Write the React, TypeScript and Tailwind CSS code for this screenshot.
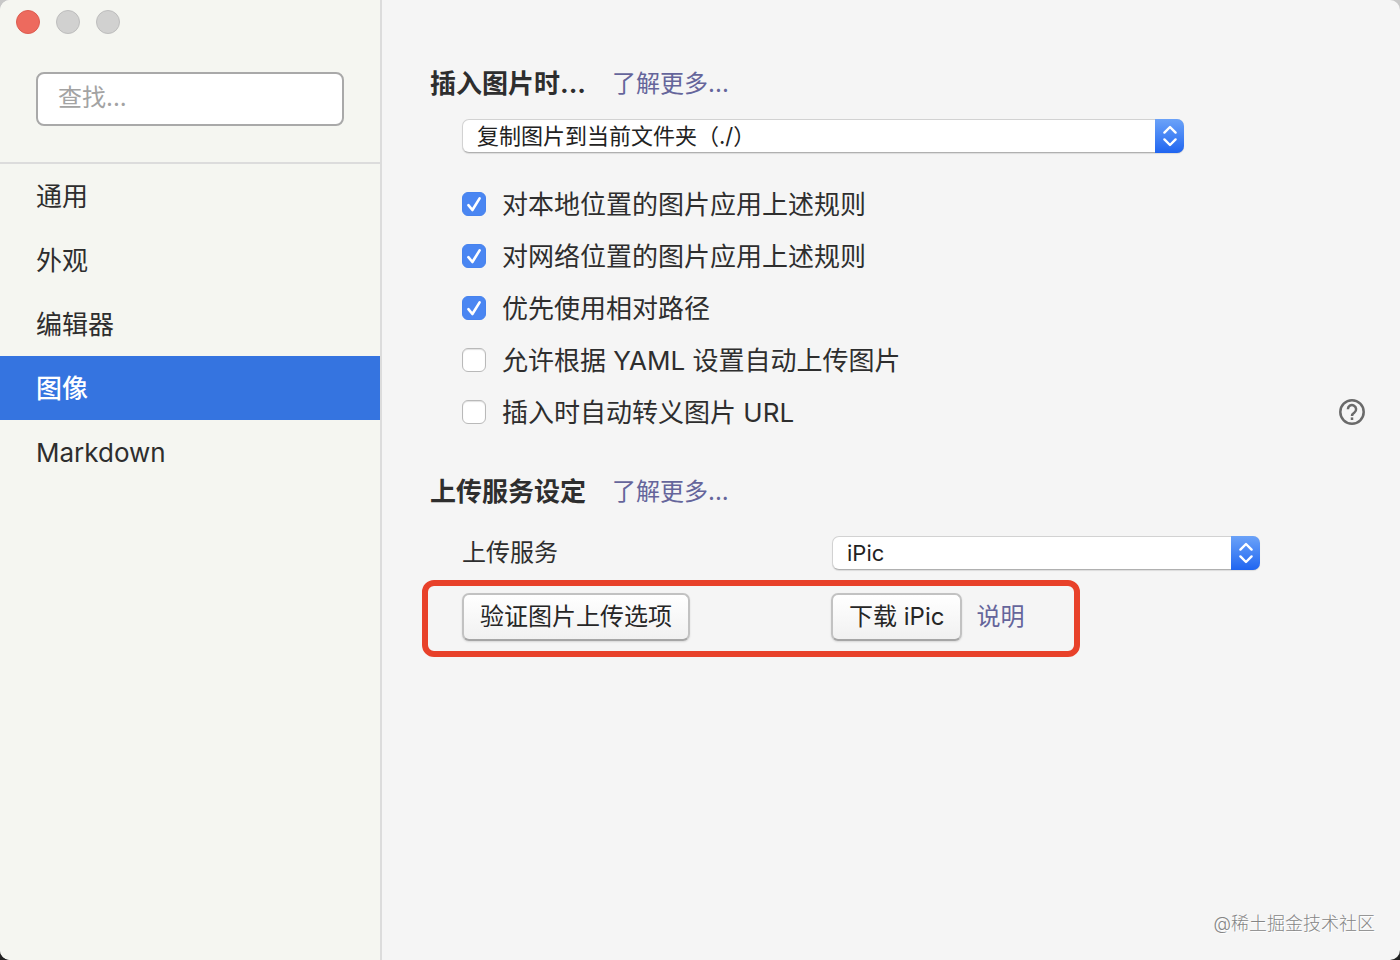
import { useState } from 'react'

interface Rule {
  id: string
  label: string
  checked: boolean
}

interface PopupSelectProps {
  id: string
  label?: string
  options: string[]
  className: string
}

const sections = ['通用', '外观', '编辑器', '图像', 'Markdown']

const initialRules: Rule[] = [
  { id: 'local', label: '对本地位置的图片应用上述规则', checked: true },
  { id: 'remote', label: '对网络位置的图片应用上述规则', checked: true },
  { id: 'relative', label: '优先使用相对路径', checked: true },
  { id: 'yaml', label: '允许根据 YAML 设置自动上传图片', checked: false },
  { id: 'escape', label: '插入时自动转义图片 URL', checked: false }
]

const buttonClass =
  'h-12 rounded-[7px] border-2 border-[#c2c2c2] border-b-[#a6a6a6] bg-linear-to-b from-white to-[#f1f1f1] px-4 text-2xl leading-8 whitespace-nowrap text-[#262626] shadow-[0_1px_2px_rgba(0,0,0,0.12)]'

const PopupSelect = ({ id, label, options, className }: PopupSelectProps) => (
  <div className={`relative max-w-full ${className}`}>
    <select
      id={id}
      aria-label={label}
      className="h-[34px] w-full appearance-none rounded-[7px] border border-[#d2d2d2] border-b-[#b0b0b0] bg-white pr-9 pl-[14px] text-[22px] leading-8 text-[#222] shadow-[0_1px_1px_rgba(0,0,0,0.1)]"
    >
      {options.map(option => (
        <option key={option}>{option}</option>
      ))}
    </select>
    {/* Blue stepper cap */}
    <span className="pointer-events-none absolute top-0 right-0 flex h-[34px] w-[29px] items-center justify-center rounded-r-[7px] bg-linear-to-b from-[#6ba2f8] to-[#1f64f0]">
      <svg width="16" height="22" viewBox="0 0 16 22" fill="none" stroke="white" strokeWidth="2.4" strokeLinecap="round" strokeLinejoin="round">
        <path d="M2.4 7.6 8 2 13.6 7.6" />
        <path d="M2.4 14.4 8 20 13.6 14.4" />
      </svg>
    </span>
  </div>
)

const Sidebar = () => {
  const [active, setActive] = useState('图像')

  return (
    <aside className="w-[382px] shrink-0 border-r-2 border-[#dcdcdc] bg-[#f5f6f1]">
      <div className="border-b-2 border-[#dcdcdc] pb-9">
        <div className="flex gap-4 px-4 pt-[10px]">
          <button aria-label="关闭" className="size-6 rounded-full border border-[#dc5c50] bg-[#ed6a5e]" />
          <button aria-label="最小化" className="size-6 rounded-full border border-[#bdbdbd] bg-[#d1d1d0]" />
          <button aria-label="缩放" className="size-6 rounded-full border border-[#bdbdbd] bg-[#d1d1d0]" />
        </div>
        <div className="px-9 pt-[38px]">
          <input
            type="search"
            aria-label="查找"
            placeholder="查找..."
            className="h-[54px] w-full rounded-lg border-2 border-[#a9a9a9] bg-white px-5 pb-1 text-2xl text-[#2b2b2b] placeholder:text-[#a3a3a3]"
          />
        </div>
      </div>
      <nav>
        {sections.map(section => (
          <button
            key={section}
            onClick={() => setActive(section)}
            className={`block h-16 w-full px-9 pt-[2px] text-left text-[26px] leading-8 ${
              active === section ? 'bg-[#3574e0] font-medium text-white' : 'text-[#2e2e2e]'
            }`}
          >
            {section}
          </button>
        ))}
      </nav>
    </aside>
  )
}

const HelpIcon = () => (
  <svg width="26" height="26" viewBox="0 0 26 26" fill="none" stroke="#6a6a6a" strokeWidth="2.5">
    <circle cx="13" cy="13" r="11.7" />
    <path d="M8.9 10.2a4.1 4.1 0 1 1 6.5 3.3c-1.5 1-2.4 1.7-2.4 3.4" />
    <path d="M13 18.4V21" />
  </svg>
)

export default function App() {
  const [rules, setRules] = useState(initialRules)

  const toggleRule = (id: string) => {
    setRules(prev => prev.map(rule => (rule.id === id ? { ...rule, checked: !rule.checked } : rule)))
  }

  return (
    <div className="flex min-h-screen bg-linear-to-b from-[#c8c8c8] to-[#222] font-[Inter,'Noto_Sans_CJK_SC',sans-serif] text-[#2e2e2e]">
      <div className="relative flex flex-1 overflow-hidden rounded-[10px] bg-[#f5f5f5]">
        <Sidebar />
        <main className="min-w-0 flex-1 pt-[66px] pr-[35px] pl-12">
          <section>
            <div className="flex items-center gap-[26px] leading-9">
              <h2 className="text-[26px] font-bold">插入图片时...</h2>
              <a href="#insert" className="text-2xl leading-9 text-[#65659b]">了解更多...</a>
            </div>
            <div className="pt-[17px] pl-8">
              <PopupSelect
                id="insert-action"
                label="插入图片时"
                options={['复制图片到当前文件夹（./）', '无特殊操作', '上传图片']}
                className="w-[722px]"
              />
              <ul className="pt-[25px]">
                {rules.map(rule => (
                  <li key={rule.id} className="flex h-[52px] items-center">
                    <span className="grid size-6 shrink-0 place-items-center">
                      <input
                        id={rule.id}
                        type="checkbox"
                        checked={rule.checked}
                        onChange={() => toggleRule(rule.id)}
                        className="col-start-1 row-start-1 size-6 appearance-none rounded-[6px] border border-[#b9b9b9] bg-white shadow-[inset_0_1px_1px_rgba(0,0,0,0.12)] checked:border-[#4783ee] checked:bg-[#4a86f2] checked:shadow-none"
                      />
                      {rule.checked && (
                        <svg className="pointer-events-none col-start-1 row-start-1" width="24" height="24" viewBox="0 0 24 24" fill="none" stroke="white" strokeWidth="2.6" strokeLinecap="round" strokeLinejoin="round">
                          <path d="m6.4 13.2 4 4.8L17.6 6.4" />
                        </svg>
                      )}
                    </span>
                    <label htmlFor={rule.id} className="pt-[2px] pl-4 text-[26px] leading-9">{rule.label}</label>
                    {rule.id === 'escape' && (
                      <button aria-label="帮助" className="ml-auto">
                        <HelpIcon />
                      </button>
                    )}
                  </li>
                ))}
              </ul>
            </div>
          </section>

          <section className="pt-9">
            <div className="flex items-center gap-[26px] leading-9">
              <h2 className="text-[26px] font-bold">上传服务设定</h2>
              <a href="#upload" className="text-2xl leading-9 text-[#65659b]">了解更多...</a>
            </div>
            <div className="flex items-center pt-[26px] pl-8">
              <label htmlFor="uploader" className="w-[370px] shrink-0 text-2xl leading-8">上传服务</label>
              <PopupSelect id="uploader" options={['iPic', 'uPic', 'PicGo']} className="w-[428px]" />
            </div>
            {/* Highlighted actions */}
            <div className="mt-[10px] -ml-2 flex w-[658px] items-center rounded-xl border-[6px] border-[#e8412a] pt-[7px] pb-[10px] pl-[34px]">
              <div className="w-[369px] shrink-0">
                <button className={buttonClass}>验证图片上传选项</button>
              </div>
              <button className={buttonClass}>下载 iPic</button>
              <a href="#help" className="pl-[14px] text-2xl leading-8 text-[#65659b]">说明</a>
            </div>
          </section>
        </main>
        <span className="absolute right-[25px] bottom-6 text-lg leading-6 font-light text-[#858585] [text-shadow:1px_1px_0_white]">@稀土掘金技术社区</span>
      </div>
    </div>
  )
}
